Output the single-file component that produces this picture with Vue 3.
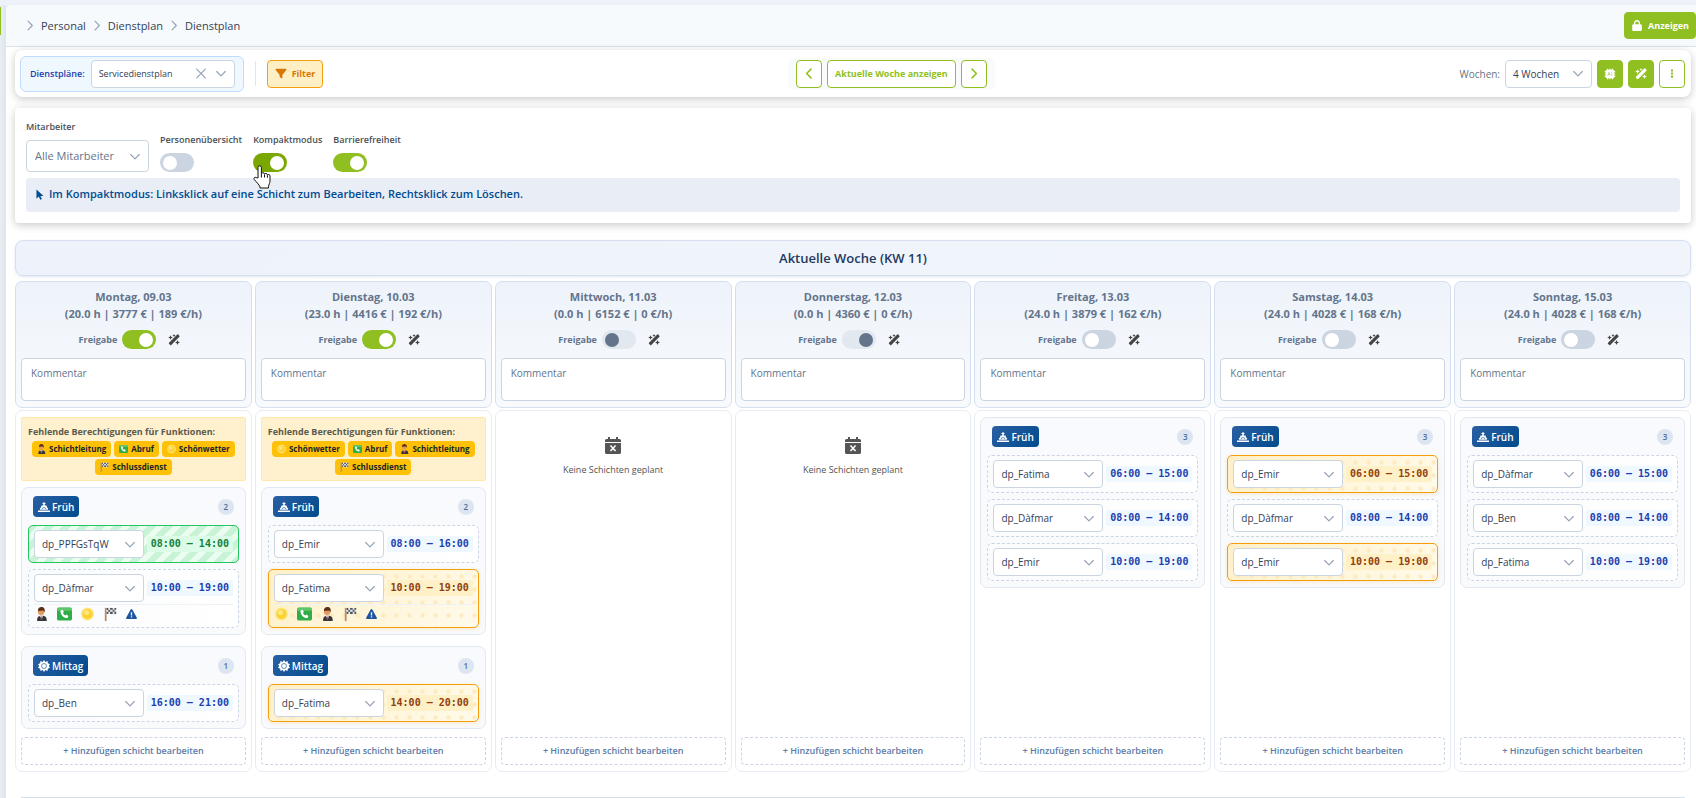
<template>
    <svg class="sprite" aria-hidden="true">
        <symbol id="i-right" viewBox="0 0 14 14"><path d="M4.5 1.5 10 7l-5.5 5.5" class="stroke" /></symbol>
        <symbol id="i-left" viewBox="0 0 14 14"><path d="M9.5 1.5 4 7l5.5 5.5" class="stroke" /></symbol>
        <symbol id="i-down" viewBox="0 0 14 14"><path d="M1.5 4.5 7 10l5.5-5.5" class="stroke" /></symbol>
        <symbol id="i-close" viewBox="0 0 14 14"><path d="m1.500 1.500 11 11M12.500 1.500l-11 11" class="stroke" /></symbol>
        <symbol id="i-filter" viewBox="0 0 512 512">
            <path d="M3.9 54.9C10.5 40.9 24.5 32 40 32l432 0c15.5 0 29.5 8.9 36.1 22.9s4.6 30.5-5.2 42.5L320 320.9 320 448c0 12.1-6.8 23.2-17.7 28.6s-23.8 4.3-33.5-3l-64-48c-8.1-6-12.8-15.5-12.8-25.6l0-79.1L9 97.3C-.7 85.4-2.8 68.8 3.9 54.9z" />
        </symbol>
        <symbol id="i-lock" viewBox="0 0 448 512">
            <path d="M144 144v48H304V144c0-44.2-35.8-80-80-80s-80 35.8-80 80zM80 192V144C80 64.5 144.5 0 224 0s144 64.5 144 144v48h16c35.3 0 64 28.7 64 64V448c0 35.3-28.7 64-64 64H64c-35.3 0-64-28.7-64-64V256c0-35.3 28.7-64 64-64H80z" />
        </symbol>
        <symbol id="i-chip" viewBox="0 0 24 24">
            <path d="M6 1.500h2.400v2h2.400v-2h2.400v2h2.400v-2H18v2a2.500 2.500 0 0 1 2.500 2.500h2v2.400h-2v2.400h2v2.400h-2v2.400h2V18h-2a2.500 2.500 0 0 1-2.500 2.500v2h-2.400v-2h-2.400v2h-2.400v-2H8.400v2H6v-2A2.500 2.500 0 0 1 3.500 18h-2v-2.400h2v-2.400h-2v-2.400h2V8.400h-2V6h2A2.500 2.500 0 0 1 6 3.500z" />
            <path d="m7.500 15.500 2.500-7 2.500 7M8.500 13h3M15.500 8.500v7" fill="none" stroke="#8fbf21" stroke-width="1" />
        </symbol>
        <symbol id="i-wand" viewBox="0 0 24 24">
            <path d="M18.500 1.200a1.500 1.500 0 0 1 2.100 0l2.200 2.200a1.500 1.500 0 0 1 0 2.100L6.500 22a1.500 1.500 0 0 1-2.100 0L2 19.600a1.500 1.500 0 0 1 0-2.100z" />
            <path d="m5 2.500 1.400 3.100L9.500 7 6.400 8.400 5 11.500 3.600 8.400.5 7l3.100-1.400zM12 0l1 2.200 2.200 1-2.200 1-1 2.200-1-2.200-2.200-1 2.200-1zM19 12l1.500 3.500L24 17l-3.500 1.500L19 22l-1.500-3.500L14 17l3.500-1.500z" />
        </symbol>
        <symbol id="i-dots" viewBox="0 0 4 16"><path d="M.5 2h3v3h-3zM.5 6.500h3v3h-3zM.5 11h3v3h-3z" /></symbol>
        <symbol id="i-pointer" viewBox="0 0 10 14"><path d="M.5.500v12l2.900-2.800 2 4 2-1-1.900-3.900h4z" /></symbol>
        <symbol id="i-sunrise" viewBox="0 0 24 20">
            <path d="m12 0 4 4.200h-2.500V7h3.700l.6 3.500 2.700 2.500-1 2.500h-15l-1-2.500 2.700-2.500L6.800 7h3.700V4.200H8zM0 17h24v3H0z" />
            <path d="M8.200 14.500a3.800 3.500 0 0 1 7.600 0" fill="none" stroke="#1f5a9e" stroke-width="1.300" />
        </symbol>
        <symbol id="i-sun" viewBox="0 0 24 24">
            <path d="m12 0 2.600 3.800L19 2l.7 4.700L24 8.500 21.500 12l2.500 3.500-4.300 1.800L19 22l-4.400-1.800L12 24l-2.600-3.800L5 22l-.7-4.700L0 15.500 2.500 12 0 8.500l4.300-1.800L5 2l4.400 1.800z" />
            <circle cx="12" cy="12" r="5" fill="none" stroke="#1f5a9e" stroke-width="1.300" />
        </symbol>
        <symbol id="i-calendar" viewBox="0 0 16 17">
            <path fill-rule="evenodd" d="M3 0h2v2h6V0h2v2h1.500A1.500 1.500 0 0 1 16 3.500V5H0V3.500A1.500 1.500 0 0 1 1.500 2H3zM0 6h16v9.500a1.500 1.500 0 0 1-1.500 1.500h-13A1.500 1.500 0 0 1 0 15.500zM6 8 4.900 9.100 7 11.300 4.900 13.400 6 14.500l2-2.100 2 2.100 1.100-1.100L9 11.300l2.100-2.200L10 8 8 10.200z" />
        </symbol>
        <symbol id="i-warn" viewBox="0 0 12 11">
            <path fill="#1f559e" d="M6 0a1 1 0 0 1 .9.500l5 9a1 1 0 0 1-.9 1.500H1a1 1 0 0 1-.9-1.500l5-9A1 1 0 0 1 6 0z" />
            <path fill="#fff" d="M5.300 3.500h1.400v3.700H5.300zM5.300 8h1.400v1.400H5.300z" />
        </symbol>
        <symbol id="e-person" viewBox="0 0 14 16">
            <path fill="#33363f" d="M2 16c0-3 0-6 5-6s6 2 6 6z" />
            <path fill="#f5f5f5" d="M4.500 10h4l-1 4z" />
            <path fill="#c0392b" d="M6 10.500h1l.7 3.500-.8 1-.9-1z" />
            <circle cx="6.500" cy="5.500" r="3.700" fill="#e39a5c" />
            <path fill="#5c2f18" d="M3 4.500C2.500 1.500 4.500 0 7 0s4.500 2 3.500 6L9 4z" />
        </symbol>
        <symbol id="e-phone" viewBox="0 0 16 14">
            <rect width="16" height="14" rx="2" fill="#2fae47" />
            <path fill="#7ed37f" d="M2 0h12a2 2 0 0 1 2 2v1.500H0V2a2 2 0 0 1 2-2z" opacity=".6" />
            <path fill="#fff" d="M4.300 3 6 2.500l1.300 2.300-1 1.100c.5 1.100 1.300 2 2.500 2.600l1.200-.9 2.200 1.500-.7 1.600c-.4.700-1.300.9-2.200.6C6.500 10.300 4.500 8 3.700 5c-.2-.8 0-1.600.6-2z" />
        </symbol>
        <symbol id="e-weather" viewBox="0 0 14 14">
            <circle cx="7" cy="7" r="6.500" fill="#ffe680" />
            <circle cx="7" cy="7" r="5" fill="#fdd12f" />
            <circle cx="6" cy="5.500" r="2.500" fill="#ffea80" />
        </symbol>
        <symbol id="e-flag" viewBox="0 0 15 16">
            <path fill="#b98a5e" d="M1 1h2v15H1z" />
            <path fill="#e8e8e8" d="M3 1c4-1.500 6 1 11-.5V8c-5 1.500-7-1-11 .5z" />
            <path fill="#50545c" d="M3 1h2v2.500H3zM7 1h3v2H7zM12 1h2v2h-2zM5 3.500h2v2H5zM10 3h2v2.500h-2zM3 5.500h2V8H3zM7 5.500h3V8H7zM12 5.500h2V8h-2z" />
        </symbol>
    </svg>

    <div class="app">
        <div class="rail"><span class="rail-mark"></span></div>
        <div class="page">
            <header class="topbar">
                <nav class="crumbs">
                    <template v-for="(c, i) in crumbs" :key="i">
                        <svg class="ic"><use href="#i-right" /></svg>
                        <a href="#">{{ c }}</a>
                    </template>
                </nav>
                <button class="btn solid show"><svg class="ic"><use href="#i-lock" /></svg>Anzeigen</button>
            </header>

            <main>
                <section class="toolbar">
                    <div class="tools">
                        <div class="plan-box">
                            <label for="plan">Dienstpläne:</label>
                            <span class="select plan">
                                <select id="plan"><option>Servicedienstplan</option></select>
                                <svg class="ic clear"><use href="#i-close" /></svg>
                                <svg class="ic arrow"><use href="#i-down" /></svg>
                            </span>
                        </div>
                        <span class="sep"></span>
                        <button class="btn filter"><svg class="ic"><use href="#i-filter" /></svg>Filter</button>
                    </div>
                    <div class="week-nav">
                        <button class="btn square" aria-label="Zurück"><svg class="ic bold"><use href="#i-left" /></svg></button>
                        <button class="btn">Aktuelle Woche anzeigen</button>
                        <button class="btn square" aria-label="Weiter"><svg class="ic bold"><use href="#i-right" /></svg></button>
                    </div>
                    <div class="tools right">
                        <label for="weeks">Wochen:</label>
                        <span class="select weeks">
                            <select id="weeks"><option>4 Wochen</option></select>
                            <svg class="ic arrow"><use href="#i-down" /></svg>
                        </span>
                        <button class="btn solid square" aria-label="KI"><svg class="ic"><use href="#i-chip" /></svg></button>
                        <button class="btn solid square" aria-label="Automatisch"><svg class="ic"><use href="#i-wand" /></svg></button>
                        <button class="btn square" aria-label="Mehr"><svg class="ic dots"><use href="#i-dots" /></svg></button>
                    </div>
                </section>

                <section class="options">
                    <div class="option-row">
                        <div class="field">
                            <label for="staff">Mitarbeiter</label>
                            <span class="select staff">
                                <select id="staff"><option>Alle Mitarbeiter</option></select>
                                <svg class="ic arrow"><use href="#i-down" /></svg>
                            </span>
                        </div>
                        <label v-for="o in options" :key="o.label" class="field">
                            {{ o.label }}
                            <span class="switch-wrap">
                                <input v-model="o.on" type="checkbox" class="switch" :class="{ hover: o.hover }">
                                <svg v-if="o.hover" class="hand" viewBox="0 0 18 24">
                                    <path d="M5 13V2.500a1.700 1.700 0 0 1 3.400 0V8.500c.5-1.200 3-1 3.100.5.600-1 2.800-.7 2.900.7.800-.6 2.600-.3 2.600 1.300v5c0 2.200-1.200 3.300-1.500 5.500v1.500H7v-1.200c-1-2.300-3.700-4.800-5.700-7.300-1.100-1.500.6-2.900 1.900-1.900zM8.400 8.500v4M11.500 9.500v3M14.400 10.200v2.500" />
                                </svg>
                            </span>
                        </label>
                    </div>
                    <p class="hint">
                        <svg class="ic"><use href="#i-pointer" /></svg>
                        Im Kompaktmodus: Linksklick auf eine Schicht zum Bearbeiten, Rechtsklick zum Löschen.
                    </p>
                </section>

                <h2 class="week-title">Aktuelle Woche (KW 11)</h2>

                <div class="week">
                    <div v-for="day in days" :key="day.name" class="day-head">
                        <h3>{{ day.name }}<br>({{ day.info }})</h3>
                        <div class="release">
                            <label>Freigabe <input v-model="day.on" type="checkbox" class="switch" :class="{ locked: day.locked }"></label>
                            <button class="wand" aria-label="Automatisch planen"><svg class="ic"><use href="#i-wand" /></svg></button>
                        </div>
                        <textarea placeholder="Kommentar" aria-label="Kommentar"></textarea>
                    </div>

                    <div v-for="day in days" :key="day.name" class="day-body">
                        <div v-if="day.missing" class="missing">
                            <strong>Fehlende Berechtigungen für Funktionen:</strong>
                            <div class="tags">
                                <span v-for="m in day.missing" :key="m" class="tag">
                                    <svg class="emoji"><use :href="'#e-' + m" /></svg>{{ roles[m] }}
                                </span>
                            </div>
                        </div>
                        <div v-if="!day.groups" class="empty">
                            <svg class="ic"><use href="#i-calendar" /></svg>
                            Keine Schichten geplant
                        </div>
                        <div v-else class="groups">
                            <section v-for="g in day.groups" :key="g.name" class="group">
                                <header>
                                    <span class="chip"><svg class="ic"><use :href="'#i-' + g.icon" /></svg>{{ g.name }}</span>
                                    <span class="count">{{ g.shifts.length }}</span>
                                </header>
                                <div v-for="(s, i) in g.shifts" :key="i" class="shift" :class="s.state">
                                    <div class="shift-main">
                                        <span class="select person">
                                            <select :aria-label="s.time"><option>dp_{{ s.who }}</option></select>
                                            <svg class="ic arrow"><use href="#i-down" /></svg>
                                        </span>
                                        <time>{{ s.time }}</time>
                                    </div>
                                    <div v-if="s.icons" class="shift-icons">
                                        <svg v-for="e in s.icons" :key="e" class="emoji"><use :href="'#e-' + e" /></svg>
                                        <svg class="emoji warn"><use href="#i-warn" /></svg>
                                    </div>
                                </div>
                            </section>
                        </div>
                        <button class="add">+ Hinzufügen schicht bearbeiten</button>
                    </div>
                </div>
                <div class="next-week"></div>
            </main>
        </div>
    </div>
</template>

<script setup>
import { reactive } from 'vue';

const crumbs = ['Personal', 'Dienstplan', 'Dienstplan'];

const options = reactive([
    { label: 'Personenübersicht', on: false },
    { label: 'Kompaktmodus', on: true, hover: true },
    { label: 'Barrierefreiheit', on: true },
]);

const roles = {
    person: 'Schichtleitung',
    phone: 'Abruf',
    weather: 'Schönwetter',
    flag: 'Schlussdienst',
};

const shift = (who, time, state = '', icons = null) => ({ who, time, state, icons });
const frueh = (...shifts) => ({ name: 'Früh', icon: 'sunrise', shifts });
const mittag = (...shifts) => ({ name: 'Mittag', icon: 'sun', shifts });

const days = reactive([
    {
        name: 'Montag, 09.03', info: '20.0 h | 3777 € | 189 €/h', on: true,
        missing: ['person', 'phone', 'weather', 'flag'],
        groups: [
            frueh(
                shift('PPFGsTqW', '08:00 – 14:00', 'wish'),
                shift('Dàfmar', '10:00 – 19:00', '', ['person', 'phone', 'weather', 'flag']),
            ),
            mittag(shift('Ben', '16:00 – 21:00')),
        ],
    },
    {
        name: 'Dienstag, 10.03', info: '23.0 h | 4416 € | 192 €/h', on: true,
        missing: ['weather', 'phone', 'person', 'flag'],
        groups: [
            frueh(
                shift('Emir', '08:00 – 16:00'),
                shift('Fatima', '10:00 – 19:00', 'conflict', ['weather', 'phone', 'person', 'flag']),
            ),
            mittag(shift('Fatima', '14:00 – 20:00', 'conflict')),
        ],
    },
    { name: 'Mittwoch, 11.03', info: '0.0 h | 6152 € | 0 €/h', on: false, locked: true },
    { name: 'Donnerstag, 12.03', info: '0.0 h | 4360 € | 0 €/h', on: true, locked: true },
    {
        name: 'Freitag, 13.03', info: '24.0 h | 3879 € | 162 €/h', on: false,
        groups: [frueh(shift('Fatima', '06:00 – 15:00'), shift('Dàfmar', '08:00 – 14:00'), shift('Emir', '10:00 – 19:00'))],
    },
    {
        name: 'Samstag, 14.03', info: '24.0 h | 4028 € | 168 €/h', on: false,
        groups: [frueh(shift('Emir', '06:00 – 15:00', 'conflict'), shift('Dàfmar', '08:00 – 14:00'), shift('Emir', '10:00 – 19:00', 'conflict'))],
    },
    {
        name: 'Sonntag, 15.03', info: '24.0 h | 4028 € | 168 €/h', on: false,
        groups: [frueh(shift('Dàfmar', '06:00 – 15:00'), shift('Ben', '08:00 – 14:00'), shift('Fatima', '10:00 – 19:00'))],
    },
]);
</script>

<style>
body {
    background: #fff;
}
</style>

<style scoped>
* {
    box-sizing: border-box;
}

.sprite {
    position: absolute;
    width: 0;
    height: 0;
}

.stroke {
    fill: none;
    stroke: currentColor;
    stroke-width: inherit;
    stroke-linecap: round;
    stroke-linejoin: round;
}

.app {
    display: flex;
    min-height: 100vh;
    padding-top: 5px;
    background: #edf1fa;
    font-family: "Open Sans", "Noto Sans", sans-serif;
    font-size: 9px;
    line-height: 16px;
    color: #334155;
    overflow: hidden;
}

button,
select,
textarea {
    font: inherit;
    color: inherit;
    margin: 0;
}

.ic {
    width: 12px;
    height: 12px;
    fill: currentColor;
    stroke-width: 1.5;
    flex: none;
}

.ic.bold {
    stroke-width: 2;
}

.ic.bold,
.btn .dots {
    height: 11px;
}

.emoji {
    width: 12px;
    height: 12px;
    flex: none;
}

.rail {
    width: 6px;
    flex: none;
    background: linear-gradient(90deg, #e9eef4, #dfe5ec);
}

.rail-mark {
    display: block;
    width: 1px;
    height: 28px;
    margin-top: 2px;
    background: #8fbf21;
}

.page {
    flex: 1;
    min-width: 0;
    background: #fff;
    border-top-left-radius: 6px;
    overflow: hidden;
}

.topbar {
    display: flex;
    align-items: center;
    justify-content: space-between;
    height: 42px;
    padding-left: 18px;
    background: #f7fafd;
    border-bottom: 1px solid #dee2e6;
}

.crumbs {
    display: flex;
    align-items: center;
    gap: 5px;
    font-size: 11px;
}

.crumbs .ic {
    color: #94a3b8;
    height: 11px;
}

.crumbs a {
    color: #334155;
    text-decoration: none;
}

main {
    padding: 3px 5px 0 9px;
}

.btn {
    display: flex;
    align-items: center;
    justify-content: center;
    gap: 5px;
    height: 28px;
    padding: 0 7px;
    border: 1px solid #8fbf21;
    border-radius: 4px;
    background: #fff;
    color: #8fbf21;
    font-weight: 700;
    white-space: nowrap;
}

.btn.solid {
    background: #8fbf21;
    color: #fff;
}

.btn.square {
    width: 26px;
    padding: 0;
}

.btn.show {
    height: 27px;
    padding: 0 6px;
}

.btn.show .ic {
    height: 11px;
}

.btn.filter {
    background: #fef0c4;
    border-color: #f59e0b;
    color: #d97706;
}

.btn.filter .ic {
    height: 11px;
}

.dots {
    width: 4px;
}

.toolbar {
    display: flex;
    align-items: center;
    justify-content: space-between;
    height: 47px;
    padding: 0 6px 0 5px;
    border-radius: 8px;
    background: #fff;
    box-shadow: 0 2px 8px rgba(0, 0, 0, 0.22);
}

.tools {
    display: flex;
    align-items: center;
}

.tools.right {
    gap: 5px;
    color: #6b7280;
}

.tools.right label {
    font-size: 10px;
}

.plan-box {
    display: flex;
    align-items: center;
    gap: 6px;
    padding: 3px 8px 3px 9px;
    border: 1px solid #bfdbfe;
    border-radius: 6px;
    background: #eff8ff;
    color: #1e40af;
    font-weight: 600;
}

.sep {
    width: 1px;
    height: 25px;
    margin: 0 11px;
    background: #e2e5e9;
}

.week-nav {
    display: flex;
    gap: 5px;
    padding: 2px 8px;
    border-radius: 6px;
    background: #f8fafc;
}

/* select with its arrow laid into the same grid cell */
.select {
    display: grid;
    grid-template-columns: 1fr auto auto;
    align-items: center;
    height: 28px;
    color: #94a3b8;
}

.select select {
    grid-area: 1 / 1 / 2 / 4;
    width: 100%;
    height: 100%;
    padding: 0 24px 0 7px;
    appearance: none;
    border: 1px solid #cbd5e1;
    border-radius: 4px;
    background: #fff;
    color: #334155;
    font-weight: 400;
}

.select .ic {
    height: 11px;
    pointer-events: none;
    z-index: 1;
}

.select .clear {
    grid-area: 1 / 2;
    margin-right: 8px;
}

.select .arrow {
    grid-area: 1 / 3;
    margin-right: 8px;
}

.select.plan {
    width: 144px;
}

.select.weeks {
    width: 87px;
    font-size: 10px;
}

.select.staff {
    width: 123px;
    height: 32px;
    font-size: 11px;
}

.select.staff select {
    padding-left: 8px;
    color: #64748b;
}

.select.person {
    flex: 1;
    min-width: 0;
    font-size: 10px;
}

.options {
    margin-top: 11px;
    padding: 11px;
    border-radius: 4px;
    background: #fff;
    box-shadow: 0 2px 8px rgba(0, 0, 0, 0.22);
}

.option-row {
    display: flex;
    align-items: flex-end;
    gap: 11px;
    font-weight: 600;
    color: #495057;
}

.field {
    display: flex;
    flex-direction: column;
    gap: 5px;
}

.switch-wrap {
    position: relative;
    display: flex;
}

.switch {
    appearance: none;
    display: flex;
    align-items: center;
    width: 34px;
    height: 19px;
    margin: 0;
    padding: 0 3px;
    border-radius: 10px;
    background: #cbd5e1;
}

.switch::before {
    content: "";
    width: 14px;
    height: 14px;
    border-radius: 50%;
    background: #fff;
}

.switch:checked {
    justify-content: flex-end;
    background: #8fbf21;
}

.switch.hover {
    background: #7ba800;
}

.switch.locked {
    background: #e2e8f0;
}

.switch.locked::before {
    background: #64748b;
}

.hand {
    position: absolute;
    left: 0;
    top: 12px;
    width: 18px;
    height: 24px;
    fill: #fff;
    stroke: #111;
    z-index: 2;
}

.hint {
    display: flex;
    align-items: center;
    gap: 5px;
    height: 34px;
    margin: 6px 0 0;
    padding: 0 10px 2px;
    border-radius: 4px;
    background: #e9edf5;
    color: #004b91;
    font-size: 11px;
    font-weight: 600;
}

.hint .ic {
    width: 8px;
    height: 11px;
}

.week-title {
    margin: 17px 0 5px;
    padding: 7px 0;
    border: 1px solid #d5dfef;
    border-radius: 8px;
    background: linear-gradient(135deg, #eef2fa, #f1f5fb);
    box-shadow: 0 1px 3px rgba(100, 130, 180, 0.2);
    color: #1e3a5f;
    font-size: 13px;
    font-weight: 600;
    line-height: 20px;
    text-align: center;
}

.week {
    display: grid;
    grid-template-columns: repeat(7, minmax(0, 1fr));
    gap: 2px 3px;
}

.day-head {
    padding: 6px 5px;
    border: 1px solid #d5dfef;
    border-radius: 7px;
    background: linear-gradient(#eef3fb, #f8fafc);
    color: #64748b;
}

.day-head h3 {
    margin: 0;
    font-size: 11px;
    font-weight: 700;
    line-height: 17px;
    text-align: center;
}

.release {
    display: flex;
    align-items: center;
    justify-content: center;
    gap: 12px;
    margin: 8px 0 9px;
    padding-right: 8px;
    font-weight: 700;
}

.release label {
    display: flex;
    align-items: center;
    gap: 5px;
}

.wand {
    display: flex;
    padding: 0;
    border: 0;
    background: none;
    color: #444;
}

textarea {
    display: block;
    width: 100%;
    height: 43px;
    padding: 6px 9px;
    border: 1px solid #cbd5e1;
    border-radius: 4px;
    background: #fff;
    font-size: 10px;
    resize: none;
}

textarea::placeholder {
    color: #64748b;
}

.day-body {
    display: flex;
    flex-direction: column;
    padding: 6px 5px;
    border: 1px solid #e8edf5;
    border-radius: 7px;
    background: #fff;
}

.missing {
    height: 64px;
    margin-bottom: 6px;
    padding: 6px;
    border: 1px solid #ffe8a8;
    border-radius: 2px;
    background: #fff1cd;
    color: #5c5a4c;
}

.missing strong {
    display: block;
    white-space: nowrap;
    margin-bottom: 1px;
}

.tags {
    display: flex;
    flex-wrap: wrap;
    justify-content: center;
    gap: 2px 3px;
    margin: 0 -4px;
}

.tag {
    display: flex;
    align-items: center;
    gap: 3px;
    padding: 0 5px;
    border-radius: 4px;
    background: #ffc107;
    color: #212529;
    font-size: 8px;
    font-weight: 700;
}

.tag .emoji {
    width: 9px;
    height: 10px;
}

.groups {
    display: flex;
    flex-direction: column;
    gap: 11px;
    margin-bottom: 8px;
}

.group {
    display: flex;
    flex-direction: column;
    gap: 6px;
    padding: 8px 6px 6px;
    border: 1px solid #e2e8f2;
    border-radius: 7px;
    background: linear-gradient(#f8fafd, #f9fafc);
}

.group header {
    display: flex;
    align-items: center;
    justify-content: space-between;
    padding: 0 5px;
    margin-bottom: 2px;
}

.chip {
    display: flex;
    align-items: center;
    gap: 2px;
    height: 21px;
    padding: 0 5px;
    border-radius: 4px;
    background: linear-gradient(135deg, #2b5fa4, #004b8d);
    color: #fff;
    font-size: 10px;
    font-weight: 600;
}

.count {
    width: 16px;
    border-radius: 8px;
    background: #dde5f0;
    color: #4a6fa5;
    font-size: 8px;
    font-weight: 600;
    text-align: center;
}

.shift {
    padding: 4px 5px;
    border: 1px dashed #cbd5e6;
    border-radius: 5px;
    background: linear-gradient(90deg, #fafbfd, #fff);
}

.shift-main {
    display: flex;
    align-items: center;
    gap: 3px;
}

.shift time {
    width: 86px;
    border-radius: 2px;
    background: #eff8ff;
    color: #1e40af;
    font-family: "DejaVu Sans Mono", monospace;
    font-size: 10px;
    font-weight: 700;
    text-align: center;
    white-space: nowrap;
}

.wish {
    border: 1px solid #22c55e;
    background: repeating-linear-gradient(135deg, #c9f3d6 0 6px, #ebfcf0 6px 12px);
}

.wish time {
    background: #dcfce7;
    color: #15803d;
}

.conflict {
    border: 1px solid #f59e0b;
    background:
        radial-gradient(circle, #fde9bb 1px, transparent 3px) 4px 0 / 13px 13px,
        linear-gradient(135deg, #fef0c7, #fffaeb);
    box-shadow: 0 1px 4px rgba(245, 158, 11, 0.2);
}

.conflict time {
    background: #fef0c7;
    color: #92400e;
}

.shift-icons {
    display: flex;
    align-items: center;
    gap: 8px;
    height: 19px;
    margin-top: 2px;
    border-top: 1px solid #eef1f6;
}

.shift-icons .emoji {
    width: 15px;
    height: 14px;
}

.shift-icons .warn {
    width: 11px;
    height: 10px;
}

.empty {
    display: flex;
    flex-direction: column;
    align-items: center;
    gap: 8px;
    padding-top: 20px;
    color: #555;
}

.empty .ic {
    width: 16px;
    height: 17px;
}

.add {
    height: 28px;
    margin-top: auto;
    border: 1px dashed #cbd5e6;
    border-radius: 4px;
    background: #fff;
    color: #5b7ba8;
    font-weight: 600;
}

.next-week {
    height: 1px;
    margin: 25px 6px 0;
    background: #d5dfe8;
}
</style>
